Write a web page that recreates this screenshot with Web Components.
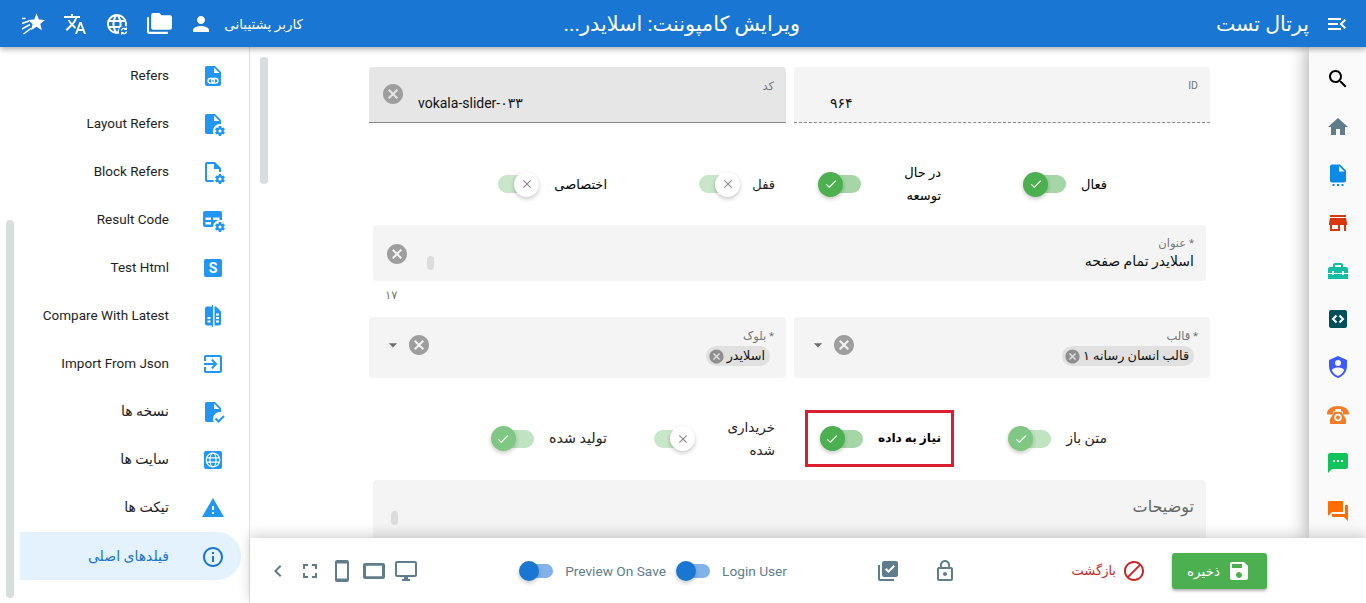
<!DOCTYPE html>
<html lang="fa" dir="rtl">
<head>
<meta charset="utf-8">
<title>ویرایش کامپوننت</title>
<style>
html,body{margin:0;padding:0;height:603px;overflow:hidden;background:#fff;font-family:Roboto,"Noto Sans","DejaVu Sans",sans-serif;}
</style>
</head>
<body>
<x-app>
  <x-topbar slot="top"></x-topbar>
  <x-sidebar slot="side">
    <x-nav label="Refers" icon="filelink"></x-nav>
    <x-nav label="Layout Refers" icon="filecog"></x-nav>
    <x-nav label="Block Refers" icon="fileoutcog"></x-nav>
    <x-nav label="Result Code" icon="tablecog"></x-nav>
    <x-nav label="Test Html" icon="sbox"></x-nav>
    <x-nav label="Compare With Latest" icon="compare"></x-nav>
    <x-nav label="Import From Json" icon="import"></x-nav>
    <x-nav label="نسخه ها" icon="filecheck"></x-nav>
    <x-nav label="سایت ها" icon="globebox"></x-nav>
    <x-nav label="تیکت ها" icon="warning"></x-nav>
    <x-nav label="فیلدهای اصلی" icon="info" active></x-nav>
  </x-sidebar>
  <x-form slot="main">
    <x-grid2>
      <x-field label="ID" kind="id"><span slot="value">۹۶۴</span></x-field>
      <x-field label="کد" kind="code" clear><span slot="value">vokala-slider-۰۳۳</span></x-field>
    </x-grid2>
    <x-switches style="margin-top:38px;height:42px">
      <x-switch-cell label="فعال" state="on" fs="13" strong></x-switch-cell>
      <x-switch-cell label="در حال&lt;br&gt;توسعه" state="on" lw="65" fs="13" strong></x-switch-cell>
      <x-switch-cell label="قفل" state="off" gap="12" fs="13"></x-switch-cell>
      <x-switch-cell label="اختصاصی" state="off" fs="13" strong></x-switch-cell>
    </x-switches>
    <x-field label="* عنوان" kind="title" clear handle style="margin:22px 4px 0"><span slot="value">اسلایدر تمام صفحه</span></x-field>
    <x-counter>۱۷</x-counter>
    <x-grid2 style="margin-top:15px">
      <x-field label="* قالب" kind="select" clear drop><x-chip slot="value">قالب انسان رسانه ۱</x-chip></x-field>
      <x-field label="* بلوک" kind="select" clear drop><x-chip slot="value">اسلایدر</x-chip></x-field>
    </x-grid2>
    <x-switches style="margin-top:32px;height:57px">
      <x-switch-cell label="متن باز" state="soft" fs="14"></x-switch-cell>
      <x-switch-cell label="نیاز به داده" state="on" marked strong bold fs="12.200" gap="15"></x-switch-cell>
      <x-switch-cell label="خریداری&lt;br&gt;شده" state="off" lw="80" gap="0" fs="13.500"></x-switch-cell>
      <x-switch-cell label="تولید شده" state="soft" fs="14.300"></x-switch-cell>
    </x-switches>
    <x-field label="توضیحات" kind="area" handle style="margin:13px 4px 0"></x-field>
  </x-form>
  <x-rail slot="rail"></x-rail>
  <x-actions slot="foot"></x-actions>
</x-app>

<script>
const COG='M18 14C17.87 14 17.76 14.09 17.74 14.21L17.55 15.53C17.25 15.66 16.96 15.82 16.7 16L15.46 15.5C15.35 15.5 15.22 15.5 15.15 15.63L14.15 17.36C14.09 17.47 14.11 17.6 14.21 17.68L15.27 18.5C15.25 18.67 15.24 18.83 15.24 19C15.24 19.17 15.25 19.33 15.27 19.5L14.21 20.32C14.12 20.4 14.09 20.53 14.15 20.64L15.15 22.37C15.21 22.5 15.34 22.5 15.46 22.5L16.7 22C16.96 22.18 17.24 22.35 17.55 22.47L17.74 23.79C17.76 23.91 17.86 24 18 24H20C20.11 24 20.22 23.91 20.24 23.79L20.43 22.47C20.73 22.34 21 22.18 21.27 22L22.5 22.5C22.63 22.5 22.76 22.5 22.83 22.37L23.83 20.64C23.89 20.53 23.86 20.4 23.77 20.32L22.7 19.5C22.72 19.33 22.74 19.17 22.74 19C22.74 18.83 22.73 18.67 22.7 18.5L23.76 17.68C23.85 17.6 23.88 17.47 23.82 17.36L22.82 15.63C22.76 15.5 22.63 15.5 22.5 15.5L21.27 16C21 15.82 20.73 15.65 20.42 15.53L20.23 14.21C20.22 14.09 20.11 14 20 14H18M19 17.5C19.83 17.5 20.5 18.17 20.5 19C20.5 19.83 19.83 20.5 19 20.5C18.16 20.5 17.5 19.83 17.5 19C17.5 18.17 18.17 17.5 19 17.5Z';
const DOC='M6 2C4.9 2 4 2.9 4 4v16c0 1.1.9 2 2 2h12c1.1 0 2-.9 2-2V8l-6-6H6zm7 1.5L18.5 9H13V3.5z';
const WEB='M16.36,14C16.44,13.34 16.5,12.68 16.5,12C16.5,11.32 16.44,10.66 16.36,10H19.74C19.9,10.64 20,11.31 20,12C20,12.69 19.9,13.36 19.74,14M14.59,19.56C15.19,18.45 15.65,17.25 15.97,16H18.92C17.96,17.65 16.43,18.93 14.59,19.56M14.34,14H9.66C9.56,13.34 9.5,12.68 9.5,12C9.5,11.32 9.56,10.65 9.66,10H14.34C14.43,10.65 14.5,11.32 14.5,12C14.5,12.68 14.43,13.34 14.34,14M12,19.96C11.17,18.76 10.5,17.43 10.09,16H13.91C13.5,17.43 12.83,18.76 12,19.96M8,8H5.08C6.03,6.34 7.57,5.06 9.4,4.44C8.8,5.55 8.35,6.75 8,8M5.08,16H8C8.35,17.25 8.8,18.45 9.4,19.56C7.57,18.93 6.03,17.65 5.08,16M4.26,14C4.1,13.36 4,12.69 4,12C4,11.31 4.1,10.64 4.26,10H7.64C7.56,10.66 7.5,11.32 7.5,12C7.5,12.68 7.56,13.34 7.64,14M12,4.03C12.83,5.23 13.5,6.57 13.91,8H10.09C10.5,6.57 11.17,5.23 12,4.03M18.92,8H15.97C15.65,6.75 15.19,5.55 14.59,4.44C16.43,5.07 17.96,6.34 18.92,8M12,2C6.47,2 2,6.5 2,12A10,10 0 0,0 12,22A10,10 0 0,0 22,12A10,10 0 0,0 12,2Z';
const p=d=>`<path fill-rule="evenodd" d="${d}"/>`;
const ICONS={
menu:p('M3 18h13v-2H3v2zm0-5h10v-2H3v2zm0-7v2h13V6H3zm18 9.59L17.42 12 21 8.41 19.59 7l-5 5 5 5L21 15.59z'),
search:p('M15.5 14h-.79l-.28-.27C15.41 12.59 16 11.11 16 9.5 16 5.91 13.09 3 9.5 3S3 5.91 3 9.5 5.91 16 9.5 16c1.61 0 3.09-.59 4.23-1.57l.27.28v.79l5 4.99L20.49 19l-4.99-5zm-6 0C7.01 14 5 11.99 5 9.5S7.01 5 9.5 5 14 7.01 14 9.5 11.99 14 9.5 14z'),
home:p('M10 20v-6h4v6h5v-8h3L12 3 2 12h3v8z'),
filedots:p('M6 1.5C4.9 1.5 4 2.4 4 3.5v14c0 1.1.9 2 2 2h12c1.1 0 2-.9 2-2v-10l-6-6H6zm7 1.5L18.5 8.5H13V3z')+'<rect x="6.5" y="21" width="2" height="2"/><rect x="11" y="21" width="2" height="2"/><rect x="15.5" y="21" width="2" height="2"/>',
store:p('M12,18H6V14H12M21,14V12L20,7H4L3,12V14H4V20H14V14H18V20H20V14M20,4H4V6H20V4Z'),
toolbox:p('M18 16H16V15H8V16H6V15H2V20H22V15H18V16M20 8H17V6C17 4.9 16.1 4 15 4H9C7.9 4 7 4.9 7 6V8H4C2.9 8 2 8.9 2 10V14H6V12H8V14H16V12H18V14H22V10C22 8.9 21.1 8 20 8M15 8H9V6H15V8Z'),
codebox:'<rect x="3" y="3" width="18" height="18" rx="2"/><path d="M10.5 8.5L7 12l3.5 3.5M13.5 8.5L17 12l-3.5 3.5" fill="none" stroke="#fff" stroke-width="2"/>',
shield:p('M12,1L3,5V11C3,16.55 6.84,21.74 12,23C17.16,21.74 21,16.55 21,11V5L12,1M12,5A3,3 0 0,1 15,8A3,3 0 0,1 12,11A3,3 0 0,1 9,8A3,3 0 0,1 12,5M17.13,17C15.92,18.85 14.11,20.24 12,20.92C9.89,20.24 8.08,18.85 6.87,17C6.53,16.5 6.24,16 6,15.47C6,13.82 8.71,12.47 12,12.47C15.29,12.47 18,13.79 18,15.47C17.76,16 17.47,16.5 17.13,17Z'),
phone:p('M1 10.5C1 6 6 3 12 3s11 3 11 7.5c0 .6-.4 1-1 1h-4c-.6 0-1-.4-1-1V8.5h-2V6H9v2.5H7v2c0 .6-.4 1-1 1H2c-.6 0-1-.4-1-1z')+p('M8.5 9h7l4.5 7v4c0 .6-.4 1-1 1H5c-.6 0-1-.4-1-1v-4l4.5-7zM12 10.7a3.8 3.8 0 1 0 0 7.6 3.8 3.8 0 0 0 0-7.6zm0 1.8a2 2 0 1 1 0 4 2 2 0 0 1 0-4z'),
sms:p('M20 2H4c-1.1 0-1.99.9-1.99 2L2 22l4-4h14c1.1 0 2-.9 2-2V4c0-1.1-.9-2-2-2zM9 11H7V9h2v2zm4 0h-2V9h2v2zm4 0h-2V9h2v2z'),
forum:p('M21 6h-2v9H6v2c0 .55.45 1 1 1h11l4 4V7c0-.55-.45-1-1-1zm-4 6V3c0-.55-.45-1-1-1H3c-.55 0-1 .45-1 1v14l4-4h10c.55 0 1-.45 1-1z'),
person:p('M12 12c2.21 0 4-1.79 4-4s-1.79-4-4-4-4 1.79-4 4 1.79 4 4 4zm0 2c-2.67 0-8 1.34-8 4v2h16v-2c0-2.66-5.33-4-8-4z'),
folders:p('M22,4H14L12,2H6A2,2 0 0,0 4,4V16A2,2 0 0,0 6,18H22A2,2 0 0,0 24,16V6A2,2 0 0,0 22,4M2,6H0V20A2,2 0 0,0 2,22H20V20H2V6Z'),
translate:p('M12.87 15.07l-2.54-2.51.03-.03c1.74-1.94 2.98-4.17 3.71-6.53H17V4h-7V2H8v2H1v1.99h11.17C11.5 7.92 10.44 9.75 9 11.35 8.07 10.32 7.3 9.19 6.69 8h-2c.73 1.63 1.73 3.17 2.98 4.56l-5.09 5.02L4 19l5-5 3.11 3.11.76-2.04zM18.5 10h-2L12 22h2l1.12-3h4.75L21 22h2l-4.5-12zm-2.62 7l1.62-4.33L19.12 17h-3.24z'),
websync:p(WEB)+'<circle cx="19" cy="19" r="5.2" fill="#1976d2"/><path d="M16.400 18.500a2.700 2.700 0 0 1 4.700-1.200M21.600 19.500a2.700 2.700 0 0 1-4.700 1.200" fill="none" stroke="currentColor" stroke-width="1.400"/><path d="M22 14.800v3.200h-3.200zM16 23.200V20h3.200z"/>',
star:'<path d="M15.500 1.500l2.400 6 6.100.4-4.700 4 1.600 6.300-5.400-3.400-5.400 3.400 1.500-6.300-4.700-4 6.300-.4z"/><path d="M8 9L1 11.500M9 12.500L1 17M10.500 16L2.500 22M4.500 6.500H1" fill="none" stroke="currentColor" stroke-width="1.500"/>',
filelink:p(DOC)+'<rect x="7" y="14.500" width="6.400" height="4.600" rx="2.300" fill="none" stroke="#fff" stroke-width="1.300"/><rect x="10.600" y="14.500" width="6.400" height="4.600" rx="2.300" fill="none" stroke="#fff" stroke-width="1.300"/>',
filecog:p('M6 2C4.89 2 4 2.9 4 4V20C4 21.11 4.89 22 6 22H12.68A7 7 0 0 1 12 19A7 7 0 0 1 19 12A7 7 0 0 1 20 12.08V8L14 2H6M13 3.5L18.5 9H13V3.5')+p(COG),
fileoutcog:p('M6 2C4.89 2 4 2.9 4 4V20C4 21.100 4.900 22 6 22H12.700V20H6V4H13V9H18V12H20V8L14 2H6Z')+p(COG),
filecheck:p('M6 2C4.89 2 4 2.9 4 4V20C4 21.11 4.89 22 6 22H12.68A7 7 0 0 1 12 19A7 7 0 0 1 19 12A7 7 0 0 1 20 12.08V8L14 2H6M13 3.5L18.5 9H13V3.5')+'<path d="M14.500 18.500l3 3 5.500-5.500" fill="none" stroke="currentColor" stroke-width="2"/>',
tablecog:p('M4 3h15a2 2 0 0 1 2 2v7.100A7 7 0 0 0 19 12a7 7 0 0 0-7 7H4a2 2 0 0 1-2-2V5a2 2 0 0 1 2-2zm.500 6.500v2.500H10V9.500zm7.500 0v2.500h6.500V9.500zM4.500 14v2.500H10V14z')+p(COG),
sbox:'<rect x="3" y="3" width="18" height="18" rx="2"/><text x="12" y="17" text-anchor="middle" font-family="Roboto,sans-serif" font-weight="700" font-size="14" fill="#fff">S</text>',
compare:p('M11 1v1.500H6a2 2 0 0 0-2 2v15a2 2 0 0 0 2 2h5V23h1V1zM6.500 13h3v2h-3zm0 3.500h3v2h-3z')+p('M13.500 2.500H15l5 5v12a2 2 0 0 1-2 2h-4.500zM15 9.500v2h3v-2zm0 3.500v2h3v-2zm0 3.500v2h3v-2z'),
import:p('M10.090 15.590L11.500 17l5-5-5-5-1.410 1.410L12.670 11H3v2h9.670l-2.580 2.590zM19 3H5c-1.110 0-2 .9-2 2v4h2V5h14v14H5v-4H3v4c0 1.100.89 2 2 2h14c1.100 0 2-.9 2-2V5c0-1.100-.9-2-2-2z'),
globebox:'<rect x="3" y="3" width="18" height="18" rx="2"/><g fill="none" stroke="#fff" stroke-width="1.200"><circle cx="12" cy="12" r="6.800"/><ellipse cx="12" cy="12" rx="3" ry="6.800"/><path d="M5.500 9.800h13M5.500 14.200h13"/></g>',
warning:p('M1 21h22L12 2 1 21zm12-3h-2v-2h2v2zm0-4h-2v-4h2v4z'),
info:p('M11 7h2v2h-2zm0 4h2v6h-2zm1-9C6.480 2 2 6.480 2 12s4.480 10 10 10 10-4.480 10-10S17.520 2 12 2zm0 18c-4.410 0-8-3.590-8-8s3.590-8 8-8 8 3.590 8 8-3.590 8-8 8z'),
desktop:p('M21 2H3c-1.100 0-2 .9-2 2v12c0 1.100.9 2 2 2h7v2H8v2h8v-2h-2v-2h7c1.100 0 2-.9 2-2V4c0-1.100-.9-2-2-2zm0 14H3V4h18v12z'),
tablet:p('M21 4H3c-1.100 0-2 .9-2 2v12c0 1.100.9 2 2 2h18c1.100 0 2-.9 2-2V6c0-1.100-.9-2-2-2zM20 17.300H4V6.700h16v10.600z'),
mobile:p('M17 1.010L7 1c-1.100 0-2 .9-2 2v18c0 1.100.9 2 2 2h10c1.100 0 2-.9 2-2V3c0-1.100-.9-1.990-2-1.990zM17 19.500H7V4.500h10v15z'),
full:p('M7 14H5v5h5v-2H7v-3zm-2-4h2V7h3V5H5v5zm12 7h-3v2h5v-5h-2v3zM14 5v2h3v3h2V5h-5z'),
chevron:p('M15.410 7.410L14 6l-6 6 6 6 1.410-1.410L10.830 12z'),
lock:p('M12 17c1.100 0 2-.9 2-2s-.9-2-2-2-2 .9-2 2 .9 2 2 2zm6-9h-1V6c0-2.760-2.240-5-5-5S7 3.240 7 6v2H6c-1.100 0-2 .9-2 2v10c0 1.100.9 2 2 2h12c1.100 0 2-.9 2-2V10c0-1.100-.9-2-2-2zM8.900 6c0-1.710 1.390-3.100 3.100-3.100s3.100 1.390 3.100 3.100v2H8.900V6zM18 20H6V10h12v10z'),
libcheck:p('M20 2H8c-1.100 0-2 .9-2 2v12c0 1.100.9 2 2 2h12c1.100 0 2-.9 2-2V4c0-1.100-.9-2-2-2zm-7.530 12L9 10.500l1.400-1.410 2.070 2.080L17.600 6 19 7.410 12.470 14zM4 6H2v14c0 1.100.9 2 2 2h14v-2H4V6z'),
block:p('M12 2C6.480 2 2 6.480 2 12s4.480 10 10 10 10-4.480 10-10S17.520 2 12 2zM4 12c0-4.420 3.580-8 8-8 1.850 0 3.550.63 4.900 1.690L5.690 16.900C4.630 15.550 4 13.850 4 12zm8 8c-1.850 0-3.550-.63-4.900-1.690L18.310 7.100C19.370 8.450 20 10.150 20 12c0 4.420-3.580 8-8 8z'),
save:p('M17 3H5c-1.110 0-2 .9-2 2v14c0 1.100.89 2 2 2h14c1.100 0 2-.9 2-2V7l-4-4zm-5 16c-1.660 0-3-1.340-3-3s1.340-3 3-3 3 1.340 3 3-1.340 3-3 3zm3-10H5V5h10v4z'),
cancel:p('M12 2C6.470 2 2 6.470 2 12s4.470 10 10 10 10-4.470 10-10S17.530 2 12 2zm5 13.590L15.590 17 12 13.410 8.410 17 7 15.590 10.590 12 7 8.410 8.410 7 12 10.590 15.590 7 17 8.410 13.410 12 17 15.590z'),
drop:p('M7 10l5 5 5-5z'),
check:p('M9 16.170L4.830 12l-1.420 1.410L9 19 21 7l-1.410-1.410z'),
close:p('M19 6.410L17.590 5 12 10.590 6.410 5 5 6.410 10.590 12 5 17.590 6.410 19 12 13.410 17.590 19 19 17.590 13.410 12z')
};
function def(name,html){
  customElements.define(name,class extends HTMLElement{
    constructor(){super();this.attachShadow({mode:'open'});}
    connectedCallback(){
      this.shadowRoot.innerHTML=typeof html==='function'?html(this):html;
    }
  });
}
def('x-icon',h=>{
  const s=h.getAttribute('size')||24,c=h.getAttribute('color')||'currentColor';
  return `<style>:host{display:inline-flex;width:${s}px;height:${s}px;flex:none;color:${c}}svg{width:100%;height:100%;fill:currentColor;display:block}</style><svg viewBox="0 0 24 24" aria-hidden="true">${ICONS[h.getAttribute('name')]||''}</svg>`;
});
def('x-app',`<style>
:host{display:grid;width:1366px;height:603px;grid-template-columns:250px 1fr;grid-template-rows:47px 1fr;overflow:hidden;direction:ltr}
.top{grid-column:1/3;grid-row:1;z-index:5}
.side{grid-column:1;grid-row:2;min-height:0;overflow:hidden}
.col{grid-column:2;grid-row:2;display:flex;flex-direction:column;min-height:0;min-width:0}
.up{flex:1;min-height:0;display:flex;overflow:hidden}
.main{flex:1;min-width:0;overflow:hidden;display:flex}
.foot{flex:none;z-index:4}
.rail{flex:none;z-index:3}
</style>
<div class="top"><slot name="top"></slot></div>
<div class="side"><slot name="side"></slot></div>
<div class="col"><div class="up"><div class="main"><slot name="main"></slot></div><div class="rail"><slot name="rail"></slot></div></div><div class="foot"><slot name="foot"></slot></div></div>`);
def('x-topbar',`<style>
:host{display:flex;direction:rtl;align-items:center;height:47px;background:#1976d2;color:#fff;box-shadow:0 2px 6px rgba(0,0,0,.35);padding-right:17px;box-sizing:border-box;width:1366px;position:relative}
.brand{font-size:20.500px;margin-right:16px;width:93px;white-space:nowrap}
.title{font-size:20.800px;margin-right:416px;width:237px;white-space:nowrap}
.group{margin-right:auto;display:flex;align-items:center;gap:18px;padding-left:21px}
.user{font-size:13.500px;white-space:nowrap;width:81px;margin-left:-10px;transform:translateX(1px)}
</style>
<x-icon name="menu"></x-icon>
<div class="brand">پرتال تست</div>
<div class="title">ویرایش کامپوننت: اسلایدر...</div>
<div class="group"><span class="user">کاربر پشتیبانی</span><x-icon name="person"></x-icon><x-icon name="folders" size="25" style="margin-right:-1px"></x-icon><x-icon name="websync"></x-icon><x-icon name="translate"></x-icon><x-icon name="star"></x-icon></div>`);
def('x-sidebar',`<style>
:host{display:flex;flex-direction:column;direction:rtl;height:556px;box-sizing:border-box;width:250px;border-right:1px solid #dfe1e3;padding:4px 0 0 20px;position:relative;background:#fff;color:#1e1e1e}
.thumb{position:absolute;left:6px;top:173px;width:8px;height:378px;border-radius:4px;background:#d8dddd}
</style><div class="thumb"></div><slot></slot>`);
def('x-nav',h=>{
  const a=h.hasAttribute('active'),l=h.getAttribute('label'),fa=/[\u0600-\u06FF]/.test(l);
  return `<style>
:host{display:flex;align-items:center;height:48px;margin-right:8px;padding-right:16px;font-size:${fa?14:13.5}px;gap:32px;white-space:nowrap;${a?'background:#e3f2fd;color:#1976d2;border-radius:0 24px 24px 0;margin-top:1px;':''}}
x-icon{color:${a?'#1976d2':'#2196f3'};margin-top:2px}
</style><x-icon name="${h.getAttribute('icon')}"></x-icon><span>${l}</span>`;
});
def('x-form',`<style>
:host{display:block;flex:1;direction:rtl;padding:20px 99px 0 119px;box-sizing:border-box;min-width:0;position:relative;color:#1e1e1e}
.thumb{position:absolute;left:10px;top:10px;width:8px;height:127px;border-radius:4px;background:#d8dddd}
</style><div class="thumb"></div><slot></slot>`);
def('x-grid2',`<style>:host{display:grid;grid-template-columns:416px 417px;gap:8px}</style><slot></slot>`);
def('x-field',h=>{
  const k=h.getAttribute('kind');
  const cfg={
    id:{hg:56,bg:'#f4f4f5',bb:'border-bottom:1px dashed #8a8a8a;'},
    code:{hg:56,bg:'#e6e6e7',bb:'border-bottom:1px solid #8a8a8a;'},
    title:{hg:56,bg:'#f4f4f5',bb:''},
    select:{hg:61,bg:'#f4f4f5',bb:''},
    area:{hg:80,bg:'#f4f4f5',bb:''}
  }[k];
  return `<style>
:host{display:flex;box-sizing:border-box;height:${cfg.hg}px;background:${cfg.bg};border-radius:4px;${cfg.bb}position:relative;padding:0 ${k==='select'?16:12}px 0 0}
:host([kind=code]),:host([kind=id]){border-radius:4px 4px 0 0}
.body{flex:1;min-width:0;display:flex;flex-direction:column;padding-top:${k==='title'?11:12}px}
.lab{font-size:${k==='area'?16:k==='id'?10.5:11.5}px;color:${k==='area'?'#666':'#757575'};line-height:14px;${k==='area'?'margin-top:5px;line-height:20px;':''}${k==='select'?'margin-right:-4px;':''}white-space:nowrap}
.val{font-size:14px;line-height:18px;color:#111;margin-top:${k==='select'?3:k==='title'?2:1}px;${k==='id'||k==='code'?`direction:ltr;text-align:left;padding-left:${k==='id'?36:49}px;`:''}display:flex}
.act{position:absolute;display:flex;align-items:center;gap:4px;direction:ltr;left:${k==='select'?14:12}px;top:${k==='select'?16:k==='title'?17:15}px}
.handle{position:absolute;width:7px;height:14px;border-radius:4px;background:#dcdcdc;left:${k==='area'?18:54}px;top:31px}
</style>
<div class="body"><div class="lab">${h.getAttribute('label')}</div><div class="val"><slot name="value"></slot></div></div>
${h.hasAttribute('handle')?'<div class="handle"></div>':''}
<div class="act">${h.hasAttribute('drop')?'<x-icon name="drop" size="20" color="#6e6e6e"></x-icon>':''}${h.hasAttribute('clear')?'<x-icon name="cancel" size="24" color="#9e9e9e"></x-icon>':''}</div>`;
});
def('x-chip',`<style>
:host{display:inline-flex;align-items:center;height:20px;background:#e0e0e0;border-radius:10px;padding:0 5px 0 2px;gap:2px;font-size:12.800px;white-space:nowrap;direction:rtl;color:#111}
</style><slot></slot><x-icon name="cancel" size="17" color="#8f8f8f"></x-icon>`);
def('x-counter',`<style>:host{display:block;font-size:11.500px;color:#757575;direction:rtl;text-align:left;padding-left:16px;margin-top:7px;line-height:14px}</style><slot></slot>`);
def('x-switches',`<style>:host{display:grid;grid-template-columns:166px 166px 168px 166px;padding-right:103px;align-items:center}</style><slot></slot>`);
def('x-toggle',h=>{
  const st=h.getAttribute('state');
  const m={on:['#4caf50','#a5d6a7'],soft:['#81c784','#c0e3c2'],off:['#fff','#c8e6c9'],blue:['#1976d2','#82b2ea']}[st];
  const blue=st==='blue';
  const w=blue?34:43,th=blue?20:25,tr=blue?14:18;
  return `<style>
:host{display:block;position:relative;width:${w}px;height:${th}px;flex:none}
.t{position:absolute;left:2px;right:0;top:${(th-tr)/2}px;height:${tr}px;border-radius:${tr/2}px;background:${m[1]}}
.k{position:absolute;${st==='off'?'right:0':'left:0'};top:0;width:${th}px;height:${th}px;border-radius:50%;background:${m[0]};box-shadow:0 2px 4px rgba(0,0,0,.22);display:flex;align-items:center;justify-content:center}
</style><div class="t"></div><div class="k">${st==='off'?'<x-icon name="close" size="14" color="#8a8a8a"></x-icon>':blue?'':'<x-icon name="check" size="14" color="#fff"></x-icon>'}</div>`;
});
def('x-switch-cell',h=>{
  const lw=h.getAttribute('lw'),g=h.getAttribute('gap')||15,mk=h.hasAttribute('marked');
  return `<style>
:host{display:flex;align-items:center;gap:${g}px;height:100%;position:relative;direction:rtl}
.l{font-size:${h.getAttribute('fs')||13}px;line-height:23px;white-space:nowrap;${lw?`width:${lw}px;`:''}${h.hasAttribute('bold')?'font-weight:700;':''}color:${h.hasAttribute('strong')?'#000':'#222'}}
.mark{position:absolute;right:-13px;top:0;width:143px;height:51px;border:3px solid #dc1f2e}
</style>${mk?'<div class="mark"></div>':''}<div class="l">${h.getAttribute('label')}</div><x-toggle state="${h.getAttribute('state')}"></x-toggle>`;
});
def('x-rail',`<style>
:host{display:flex;flex-direction:column;align-items:center;width:57px;height:491px;box-sizing:border-box;background:#fbfafa;box-shadow:-3px 0 16px rgba(0,0,0,.3);padding-top:20px;gap:24px;position:relative}
</style>
<x-icon name="search" color="#000"></x-icon>
<x-icon name="home" color="#607d8b"></x-icon>
<x-icon name="filedots" color="#0a8be8"></x-icon>
<x-icon name="store" color="#d9380f"></x-icon>
<x-icon name="toolbox" color="#10bfa3"></x-icon>
<x-icon name="codebox" color="#00505c"></x-icon>
<x-icon name="shield" color="#3d5afe"></x-icon>
<x-icon name="phone" color="#f47c24"></x-icon>
<x-icon name="sms" color="#10c45c"></x-icon>
<x-icon name="forum" color="#ff6d00"></x-icon>`);
def('x-actions',`<style>
:host{display:flex;direction:rtl;align-items:center;height:65px;box-sizing:border-box;background:#fff;padding-right:99px;box-shadow:0 -3px 12px rgba(0,0,0,.18);position:relative;color:#607d8b;font-size:13.700px}
.save{display:flex;align-items:center;gap:7px;width:95px;height:36px;box-sizing:border-box;padding:0 16px;background:#4caf50;color:#fff;border-radius:3px;font-size:13.500px;box-shadow:0 2px 3px rgba(0,0,0,.3);white-space:nowrap}
.back{display:flex;align-items:center;gap:6px;color:#c62828;margin-right:26px;white-space:nowrap;width:74px;font-size:13px}
.tg{display:flex;align-items:center;gap:12px;white-space:nowrap}
.dev{display:flex;align-items:center;margin-right:auto;padding-left:16px;gap:8px}
</style>
<div class="save"><x-icon name="save"></x-icon><span>ذخیره</span></div>
<div class="back"><x-icon name="block"></x-icon><span>بازگشت</span></div>
<x-icon name="lock" style="margin-right:115px"></x-icon>
<x-icon name="libcheck" style="margin-right:33px"></x-icon>
<div class="tg" style="margin-right:89px"><span>Login User</span><x-toggle state="blue"></x-toggle></div>
<div class="tg" style="margin-right:10px"><span>Preview On Save</span><x-toggle state="blue"></x-toggle></div>
<div class="dev"><x-icon name="desktop"></x-icon><x-icon name="tablet"></x-icon><x-icon name="mobile"></x-icon><x-icon name="full"></x-icon><x-icon name="chevron"></x-icon></div>`);
</script>
</body>
</html>
